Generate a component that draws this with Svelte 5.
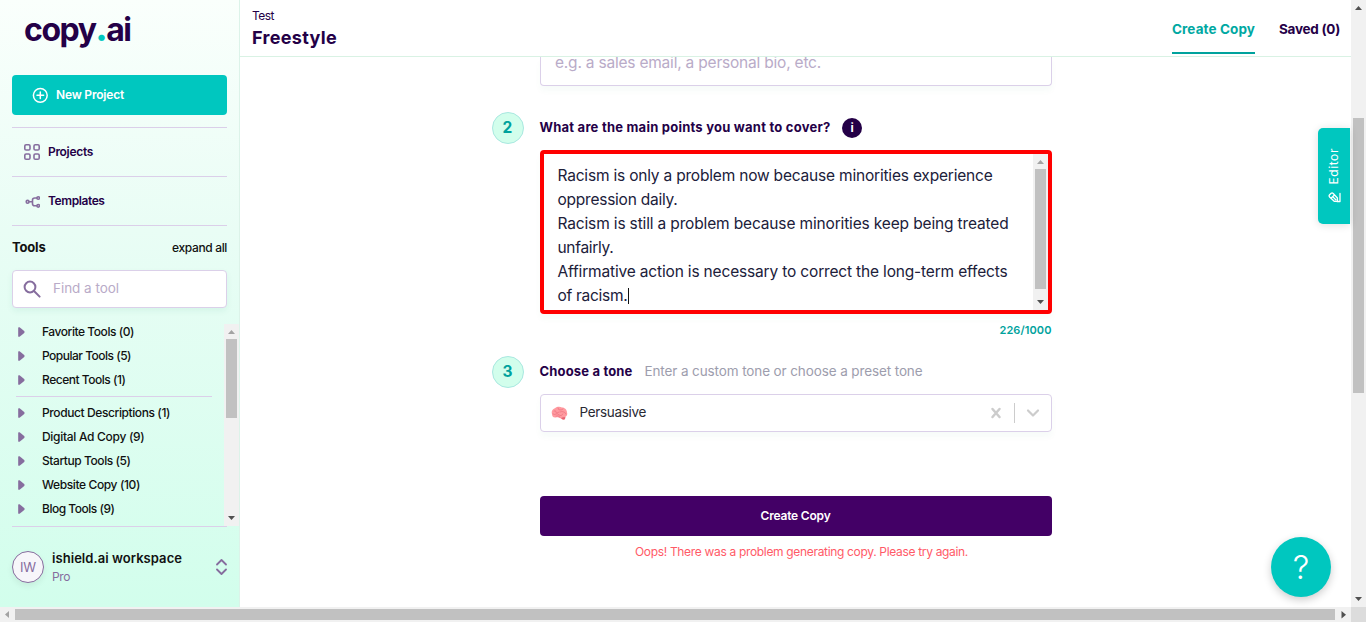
<script>
  const groups = [
    [['Favorite Tools (0)', 92], ['Popular Tools (5)', 89], ['Recent Tools (1)', 83.5]],
    [['Product Descriptions (1)', 128], ['Digital Ad Copy (9)', 102.5], ['Startup Tools (5)', 88.5], ['Website Copy (10)', 98], ['Blog Tools (9)', 72.5]],
  ];
  const lines = [
    ['Racism is only a problem now because minorities experience', 435],
    ['oppression daily.', 120],
    ['Racism is still a problem because minorities keep being treated', 451],
    ['unfairly.', 56],
    ['Affirmative action is necessary to correct the long-term effects', 450],
    ['of racism.', 70],
  ];

  // Tracks the text so that it spans the given width.
  function fit(node, width) {
    const natural = node.getBoundingClientRect().width;
    const spacing = (width - natural) / node.textContent.length;
    node.style.letterSpacing = `${spacing.toFixed(3)}px`;
  }
</script>

{#snippet t(text, width)}<span class="t" use:fit={width}>{text}</span>{/snippet}

{#snippet scroller(kind, dim)}
  <div class="scroll {kind}">
    <svg class="arrow" class:dim viewBox="0 0 15 15"><path d="M4 10h7L7.500 6z" /></svg>
    <i></i>
    <svg class="arrow down" viewBox="0 0 15 15"><path d="M4 5h7L7.500 9z" /></svg>
  </div>
{/snippet}

<div class="page">
  <div class="app">
    <aside>
      <div class="logo"><span class="t" use:fit={106.5}>copy<b>.</b>ai</span></div>
      <button class="new">
        <svg width="16" height="16" viewBox="0 0 16 16"><circle cx="8.3" cy="8.3" r="6.9" /><path d="M8.300 5v6.600M5 8.300h6.600" /></svg>
        {@render t('New Project', 68)}
      </button>
      <nav>
        <div class="item">
          <svg width="16" height="16" viewBox="0 0 16 16"><rect x=".8" y=".8" width="5.2" height="5.2" rx="1.3" /><rect x="10" y=".8" width="5.2" height="5.2" rx="1.3" /><rect x=".8" y="10" width="5.2" height="5.2" rx="1.3" /><rect x="10" y="10" width="5.2" height="5.2" rx="1.3" /></svg>
          {@render t('Projects', 45)}
        </div>
        <div class="item">
          <svg width="16" height="16" viewBox="0 0 16 16"><circle cx="3.6" cy="8.8" r="1.4" /><circle cx="14.200" cy="5" r="1.3" /><circle cx="14.200" cy="12.800" r="1.3" /><path d="M5.100 8.800h3M12.800 5h-2Q8.500 5 8.500 7v3.800q0 2 2.200 2h2" /></svg>
          {@render t('Templates', 56.5)}
        </div>
      </nav>
      <div class="toolhead"><strong>{@render t('Tools', 33.5)}</strong>{@render t('expand all', 55)}</div>
      <div class="search">
        <svg width="18" height="18" viewBox="0 0 18 18"><circle cx="7" cy="7" r="5.4" /><path d="M11 11l5.600 5.600" /></svg>
        {@render t('Find a tool', 66)}
      </div>
      <div class="tools">
        <div class="list">
          {#each groups as group}
            <ul>
              {#each group as [name, width]}
                <li><svg width="8" height="10" viewBox="0 0 8 10"><path d="M.2 .8Q.2 0 1.600 .3L6.200 4Q7.100 5 6.200 6L1.600 9.700Q.2 10 .2 9.200z" /></svg>{@render t(name, width)}</li>
              {/each}
            </ul>
          {/each}
        </div>
        {@render scroller('side', true)}
      </div>
      <div class="workspace">
        <div class="avatar">{@render t('IW', 16)}</div>
        <div class="who"><strong>{@render t('ishield.ai workspace', 130)}</strong><small>{@render t('Pro', 18)}</small></div>
        <svg width="12" height="18" viewBox="0 0 12 18"><path d="M2 6.500L6.500 2l4.500 4.500M2 11.500L6.500 16l4.500-4.500" /></svg>
      </div>
    </aside>

    <section>
      <header>
        <div class="title"><span>{@render t('Test', 22)}</span><h1>{@render t('Freestyle', 85)}</h1></div>
        <div class="tabs">
          <div class="tab on">{@render t('Create Copy', 83)}</div>
          <div class="tab">{@render t('Saved (0)', 61)}</div>
        </div>
      </header>
      <main>
        <div class="prompt">{@render t('e.g. a sales email, a personal bio, etc.', 266)}</div>
        <div class="step second"><div class="num">2</div><strong>{@render t('What are the main points you want to cover?', 291)}</strong><div class="info">i</div></div>
        <div class="area">
          <div class="text">
            {#each lines as [line, width], n}
              <div>{@render t(line, width)}{#if n === lines.length - 1}<i class="caret"></i>{/if}</div>
            {/each}
          </div>
          {@render scroller('inner', true)}
        </div>
        <div class="count">{@render t('226/1000', 52)}</div>
        <div class="step third"><div class="num">3</div><strong>{@render t('Choose a tone', 93)}</strong><em>{@render t('Enter a custom tone or choose a preset tone', 278)}</em></div>
        <div class="select">
          <svg class="brain" width="17" height="15" viewBox="0 0 17 15">
            <path fill="#ff9aa0" d="M1 8C0 5 2 3 4 2.300C6 .5 9 .5 11 1.500C14 1.500 16 4 16 6.500C17 9 15 11 13.500 11L14 13Q12 14.500 10 12.500C8 12 7 11 5 11.500C2 12 1 10 1 8z" />
            <path fill="#e76372" d="M10 12Q12 11 14.500 11L14 13Q12 14.500 10 12z" />
            <path fill="none" stroke="#ee7682" stroke-width=".8" d="M3 5q2-1 2 1t3 0M7 2q0 2 2 2t3-1M2 8q2 1 3 0t3 1 4-1M9 6q2-1 4 0t2 2M5 10q2-1 4 1" />
          </svg>
          {@render t('Persuasive', 66.5)}
          <svg class="x" width="12" height="12" viewBox="0 0 12 12"><path d="M2.500 2l7 8M9.500 2l-7 8" /></svg>
          <i class="bar"></i>
          <svg class="chev" width="14" height="10" viewBox="0 0 14 10"><path d="M2 2.500l5 5 5-5" /></svg>
        </div>
        <button class="create">{@render t('Create Copy', 70)}</button>
        <p class="error">{@render t('Oops! There was a problem generating copy. Please try again.', 333)}</p>
      </main>
    </section>
    {@render scroller('main', false)}
  </div>
  <div class="bottom">
    <svg class="arrow dim" viewBox="0 0 15 15"><path d="M9 4v7L5 7.500z" /></svg>
    <i></i>
    <svg class="arrow" viewBox="0 0 15 15"><path d="M6.500 4v7.500L11 7.750z" /></svg>
    <b></b>
  </div>
  <div class="editor">
    <svg width="13" height="11" viewBox="0 0 13 11"><path d="M3.200 1.200Q4.200 .5 5.200 1.500L9.400 6V9.300H6.200L1.600 5Q.6 3.800 1.600 2.800zM3.200 6L6.500 3M4.600 4.600l3.200 3.200M12 1.500v8h-3" /></svg>
    {@render t('Editor', 35)}
  </div>
  <div class="help">?</div>
</div>

<style>
  :global(body) { margin: 0; overflow: hidden; }
  .page { position: relative; width: 1366px; height: 622px; display: flex; flex-direction: column; overflow: hidden; background: #fff; color: #240047; font-family: Inter, "Liberation Sans", sans-serif; font-size: 12px; line-height: 16px; }
  .page * { box-sizing: border-box; }
  svg { display: block; flex: none; fill: none; stroke-linecap: round; stroke-linejoin: round; }
  .t { white-space: pre; display: inline-block; }
  button { border: 0; font: inherit; color: #fff; }
  .app { display: flex; height: 607px; }

  aside { width: 240px; height: 607px; flex: none; display: flex; flex-direction: column; border-right: 1px solid #dcf3e9; background: linear-gradient(#fafffc, #e9fdf5 38%, #d2feec); }
  .logo { height: 75px; padding: 10px 0 0 24px; font-size: 32px; line-height: 40px; font-weight: 700; }
  .logo b { color: #00c7bf; }
  .new { margin: 0 12px; width: 215px; height: 40px; flex: none; padding: 0 20px; display: flex; align-items: center; gap: 8px; border-radius: 4px; background: #00c7bf; font-weight: 600; }
  .new svg { stroke: #fff; stroke-width: 1.5; }
  nav { margin: 12px 12px 0; border-bottom: 1px solid #dbcfe9; }
  .item { height: 49px; padding-left: 12px; display: flex; align-items: center; gap: 8px; border-top: 1px solid #dbcfe9; font-weight: 600; }
  .item svg { stroke: #866d9e; stroke-width: 1.6; }
  .toolhead { height: 44px; flex: none; padding: 0 12px; display: flex; justify-content: space-between; align-items: center; color: #111; font-weight: 500; }
  .toolhead strong { font-size: 13px; font-weight: 700; margin-top: -2px; }
  .search { margin: 0 12px; height: 38px; flex: none; padding-left: 10px; display: flex; align-items: center; gap: 12px; border: 1px solid #dbd0e9; border-radius: 4px; background: #fff; box-shadow: 0 3px 6px #00806012; color: #b9abc8; font-size: 13.5px; }
  .search :global(.t) { margin-top: -2px; }
  .search svg { stroke: #866d9e; stroke-width: 2; }
  .tools { height: 202px; margin-top: 16px; flex: none; display: flex; }
  .list { flex: 1; padding: 0 12px 0 16px; margin-top: -4px; }
  ul { margin: 0; padding: 0; list-style: none; }
  ul + ul { margin-top: 4px; border-top: 1px solid #dbcfe9; padding-top: 4px; }
  li { height: 24px; padding-left: 2px; display: flex; align-items: center; gap: 16px; color: #111; font-weight: 500; }
  li svg { fill: #866d9e; }
  .workspace { margin: 0 12px; height: 81px; display: flex; align-items: center; border-top: 1px solid #dbcfe9; }
  .avatar { width: 32px; height: 32px; border: 1px solid #866d9e; border-radius: 50%; background: #f7f6fa; display: grid; place-items: center; color: #866d9e; font-size: 13px; box-shadow: 0 3px 6px #0001; }
  .who { flex: 1; margin-left: 8px; display: flex; flex-direction: column; line-height: 18px; }
  .who strong { color: #111; font-size: 13px; font-weight: 600; }
  .who small { color: #866d9e; font-size: 12px; padding-top: 1px; }
  .workspace > svg { stroke: #866d9e; stroke-width: 1.8; }

  section { flex: 1; min-width: 0; display: flex; flex-direction: column; }
  header { position: relative; z-index: 1; height: 57px; flex: none; padding: 0 11px 0 12px; display: flex; justify-content: space-between; border-bottom: 1px solid #d9f2e4; background: #fff; }
  .title { padding-top: 8px; }
  .title > span { display: block; line-height: 16px; }
  h1 { margin: 2px 0 0; font-size: 18px; line-height: 24px; font-weight: 700; }
  .tabs { display: flex; gap: 24px; font-size: 13.5px; font-weight: 650; }
  .tab { height: 54px; padding-top: 21px; }
  .on { color: #00a8a2; border-bottom: 2px solid #00a29d; }
  main { flex: 1; width: 560px; margin-left: 252px; padding-left: 48px; }
  .prompt { height: 29px; border: 1px solid #dbd0e9; border-top: 0; border-radius: 0 0 4px 4px; padding-left: 14px; color: #b9abc8; font-size: 15.5px; line-height: 12px; box-shadow: 0 5px 6px #00806009; }
  .step { height: 32px; margin-left: -48px; display: flex; align-items: center; }
  .second { margin-top: 26px; }
  .third { margin-top: 18px; }
  .num { width: 32px; height: 32px; margin-right: 15.5px; padding-right: 1px; display: grid; place-items: center; border: 1px solid #a9e8e0; border-radius: 50%; background: #d2feec; color: #00a29d; font-size: 15.5px; font-weight: 700; }
  .step strong { font-size: 13px; font-weight: 700; margin-top: -2px; }
  .step em { margin: -2px 0 0 12px; font-style: normal; color: #9d9dad; font-size: 13.500px; }
  .info { width: 20px; height: 20px; margin-left: 11.5px; border-radius: 50%; background: #240047; color: #fff; display: grid; place-items: center; font-weight: 700; }
  .area { height: 164px; margin-top: 6px; display: flex; border: 4px solid #f00; border-radius: 4px; box-shadow: 0 5px 6px #00806009; }
  .text { flex: 1; padding: 10px 0 0 13.5px; color: #20203a; font-size: 15.500px; line-height: 24px; }
  .text div { height: 24px; display: flex; align-items: center; }
  .caret { width: 1px; height: 16px; background: #111; }
  .count { height: 24px; padding: 8px .5px 0 0; display: flex; justify-content: flex-end; color: #00a29d; font-size: 11px; font-weight: 600; }
  .select { height: 38px; margin-top: 6px; padding-left: 10px; display: flex; align-items: center; border: 1px solid #dbd0e9; border-radius: 4px; box-shadow: 0 5px 6px #00806009; color: #292933; font-size: 13.500px; }
  .select :global(.t) { margin-top: -2px; }
  .brain { margin-right: 11.5px; }
  .x { margin-left: auto; stroke: #ccc; stroke-width: 2.500; }
  .bar { width: 1px; height: 20px; margin: 0 11px 0 12px; background: #ccc; }
  .chev { margin-right: 11px; stroke: #ccc; stroke-width: 2.200; }
  .create { display: block; width: 512px; height: 40px; margin-top: 64px; padding: 0 1px 0 0; border-radius: 4px; background: #430066; font-weight: 600; }
  .error { margin: 8px 0 0 95px; color: #ff5a67; white-space: nowrap; }

  .scroll { width: 15px; flex: none; display: flex; flex-direction: column; background: #f1f1f1; }
  .scroll i { width: 11px; margin: 0 2px; background: #c1c1c1; }
  .arrow { width: 15px; height: 15px; fill: #505050; }
  .dim { fill: #a3a3a3; }
  .down { margin-top: auto; }
  .side i { height: 79px; }
  .inner i { height: 120px; }
  .main i { height: 275px; margin-top: 103px; }
  .bottom { height: 15px; display: flex; align-items: center; background: #f1f1f1; }
  .bottom i { width: 1320px; height: 11px; background: #c1c1c1; }
  .bottom b { width: 15px; height: 15px; margin-left: auto; background: #dcdcdc; }
  .editor { position: absolute; left: 1318px; top: 128px; width: 32px; height: 96px; display: flex; flex-direction: column-reverse; align-items: center; justify-content: center; gap: 8px; padding-bottom: 1px; border-radius: 5px 0 0 5px; background: #00c7bf; color: #fff; box-shadow: 0 1px 8px #0002; }
  .editor :global(.t) { writing-mode: vertical-rl; transform: rotate(180deg); letter-spacing: .6px !important; }
  .editor svg { stroke: #fff; stroke-width: 1.300; }
  .help { position: absolute; left: 1271px; top: 537px; width: 60px; height: 60px; display: grid; place-items: center; border-radius: 50%; background: #00c7bf; color: #fff; font-size: 33px; line-height: 60px; font-weight: 300; box-shadow: 0 3px 8px #0003; }
</style>
